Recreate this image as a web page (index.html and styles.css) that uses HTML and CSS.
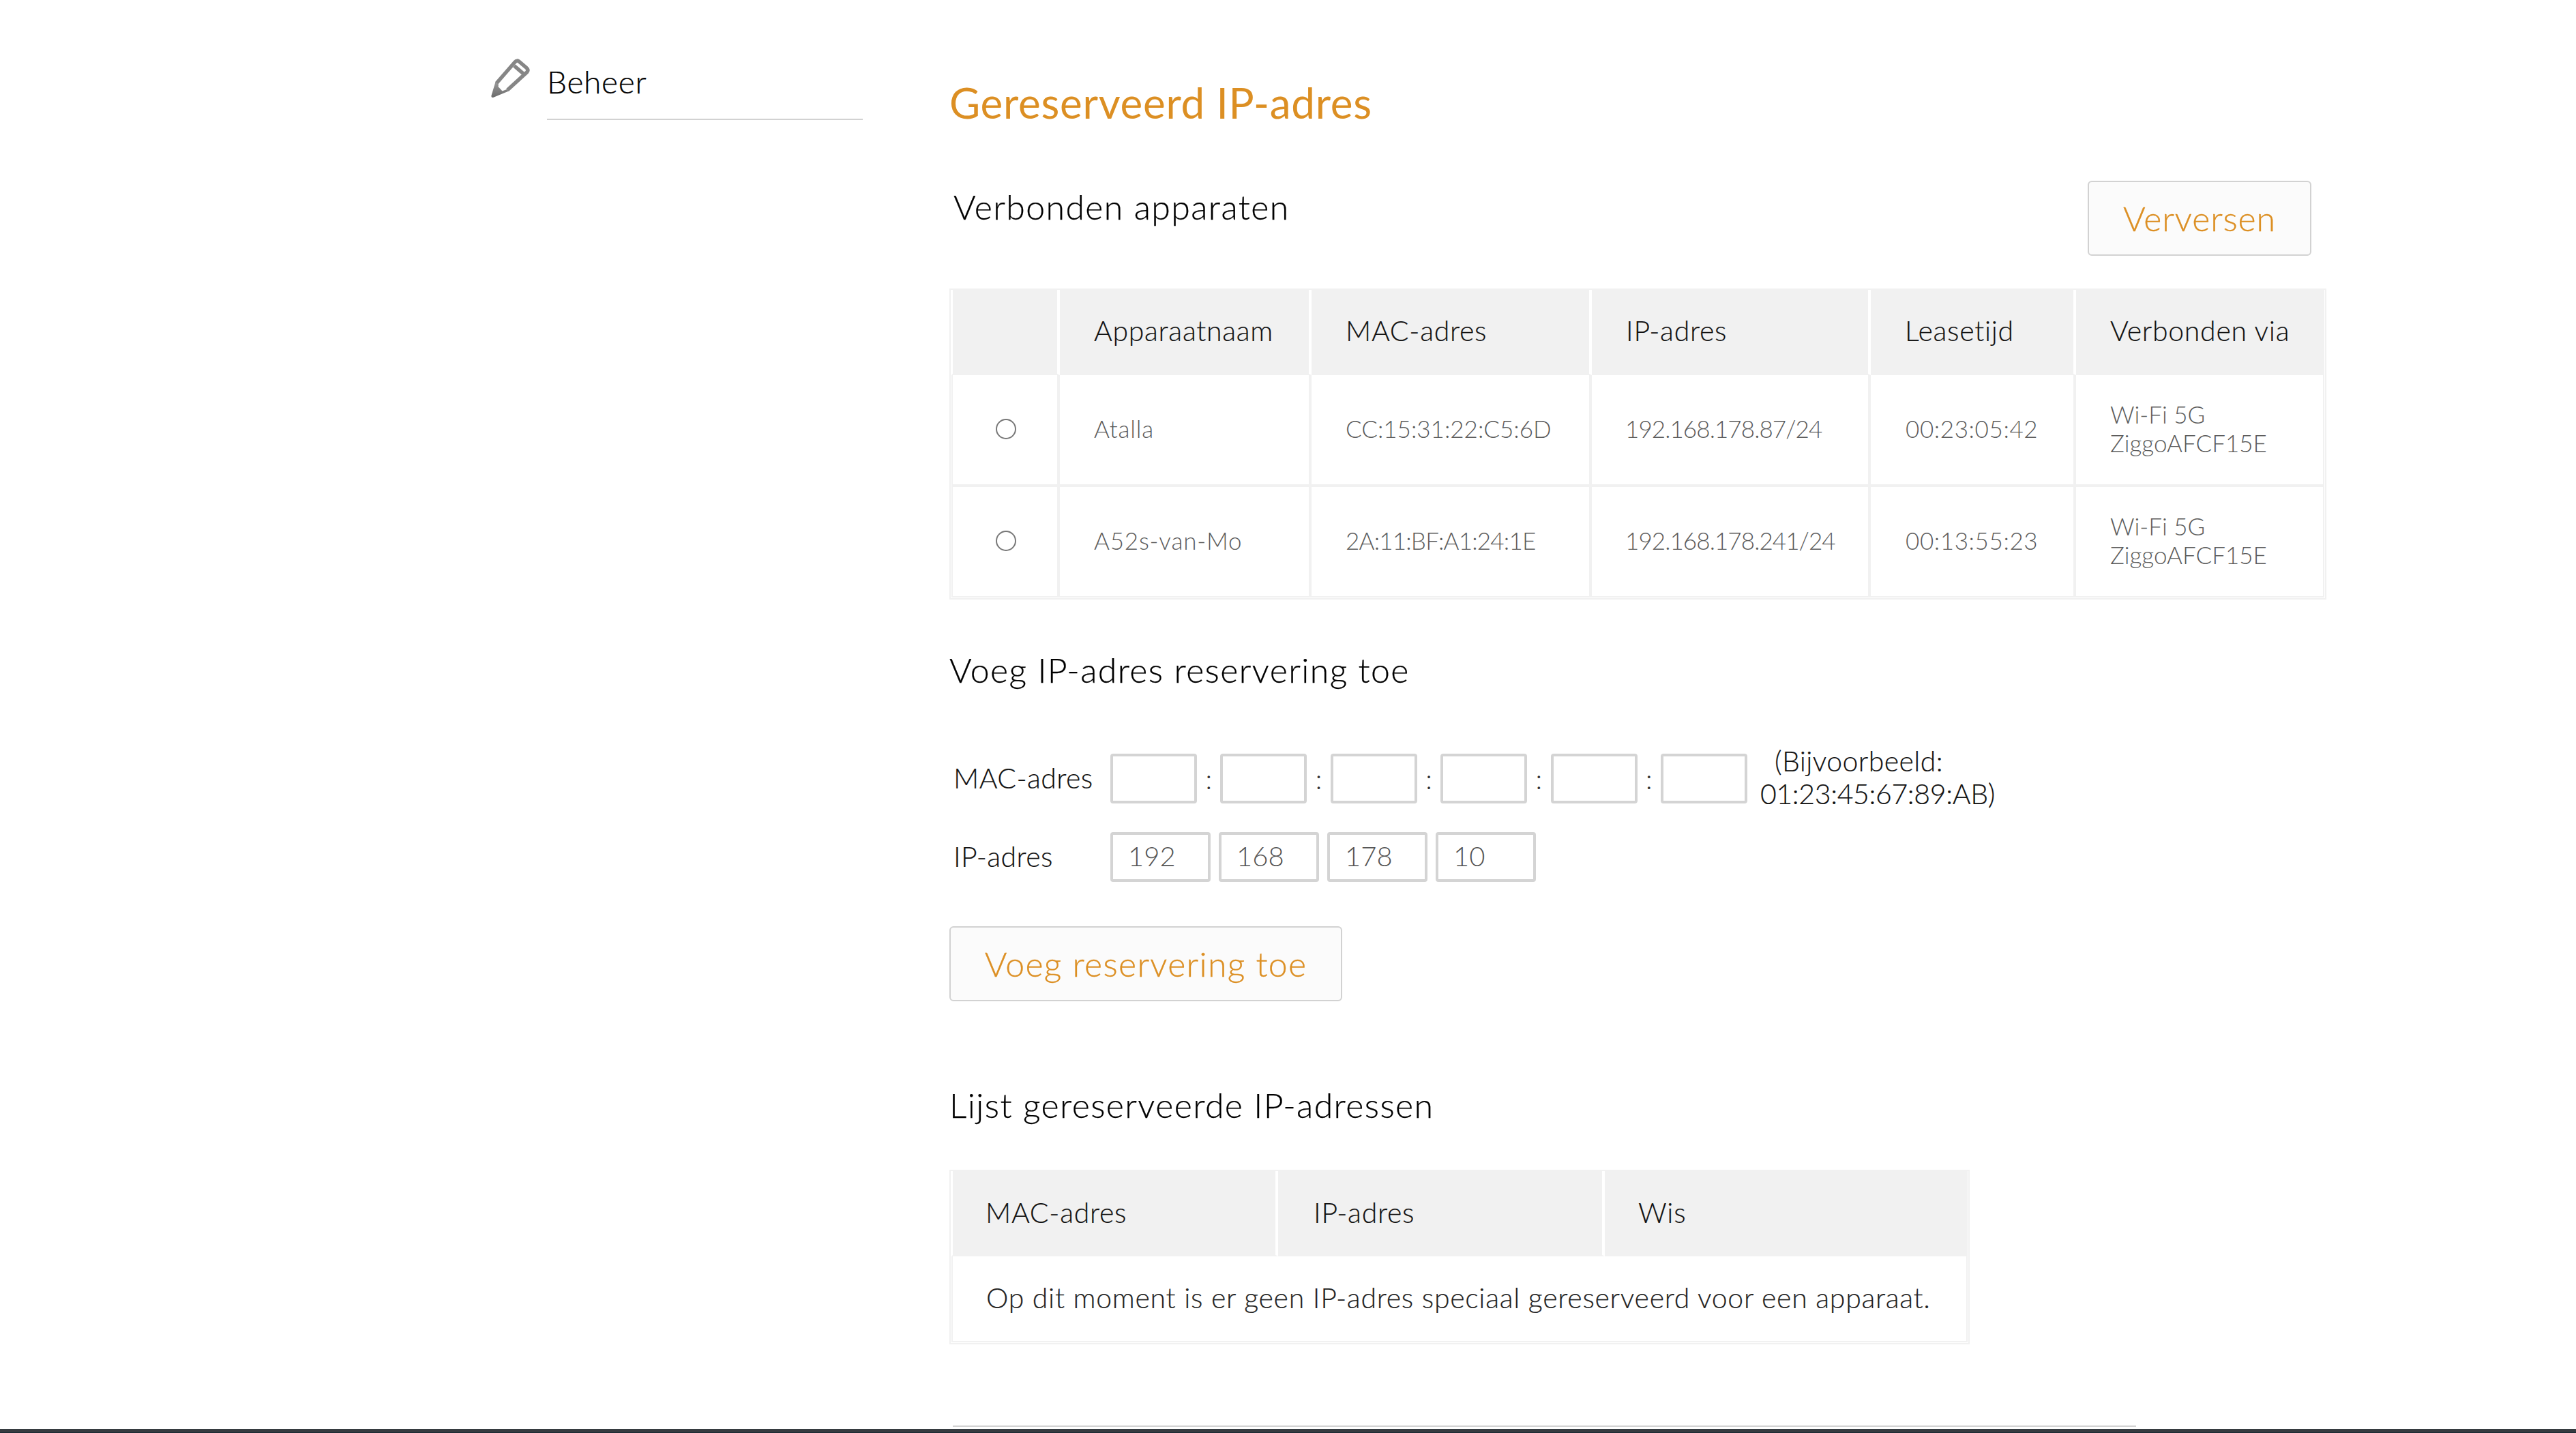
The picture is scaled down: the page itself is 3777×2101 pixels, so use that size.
FILE: index.html
```html
<!DOCTYPE html>
<html lang="nl">
<head>
<meta charset="utf-8">
<title>Gereserveerd IP-adres</title>
<link rel="stylesheet" href="styles.css">
</head>
<body>
<div class="page">
  <aside class="side">
    <svg class="pencil" viewBox="0 0 60 60" aria-hidden="true">
      <defs>
        <linearGradient id="pg" x1="0" y1="0" x2="0" y2="1">
          <stop offset="0" stop-color="#9a9a9a"/>
          <stop offset="1" stop-color="#6a6a6a"/>
        </linearGradient>
      </defs>
      <path class="pencil-line" d="M10 37 L37 6 Q40 2.500 43.500 5.500 L54 14.500 Q57.500 17.500 54.500 21 L26 47"/>
      <path class="pencil-line" d="M36 11.500 L50 23.500"/>
      <path class="pencil-tip" d="M8.500 35 L13 39 L12.500 42 L18.500 48.500 L25 46 L28 48.500 L5 58 Q2 58.500 2.500 55 Z"/>
    </svg>
    <div class="side-item">Beheer</div>
  </aside>
  <main class="main">
    <h1 class="title">Gereserveerd IP-adres</h1>
    <div class="head-row">
      <h2 class="sub sub-indent">Verbonden apparaten</h2>
      <button class="btn" type="button">Verversen</button>
    </div>
    <div class="tbl tbl-devices">
      <table>
        <colgroup>
          <col class="d1"><col class="d2"><col class="d3"><col class="d4"><col class="d5"><col class="d6">
        </colgroup>
        <thead>
          <tr><th></th><th>Apparaatnaam</th><th>MAC-adres</th><th>IP-adres</th><th>Leasetijd</th><th>Verbonden via</th></tr>
        </thead>
        <tbody>
          <tr>
            <td class="radio-cell"><input class="radio" type="radio" name="dev"></td>
            <td class="c-name">Atalla</td><td>CC:15:31:22:C5:6D</td><td class="c-ip">192.168.178.87/24</td><td class="c-time">00:23:05:42</td><td>Wi-Fi 5G<br>ZiggoAFCF15E</td>
          </tr>
          <tr>
            <td class="radio-cell"><input class="radio" type="radio" name="dev"></td>
            <td class="c-name">A52s-van-Mo</td><td class="c-mac2">2A:11:BF:A1:24:1E</td><td class="c-ip">192.168.178.241/24</td><td class="c-time">00:13:55:23</td><td>Wi-Fi 5G<br>ZiggoAFCF15E</td>
          </tr>
        </tbody>
      </table>
    </div>
    <h2 class="sub add-title">Voeg IP-adres reservering toe</h2>
    <div class="form-row mac-row">
      <label class="form-label">MAC-adres</label>
      <div class="mac-fields">
        <input class="field mac" type="text"><span class="colon">:</span>
        <input class="field mac" type="text"><span class="colon">:</span>
        <input class="field mac" type="text"><span class="colon">:</span>
        <input class="field mac" type="text"><span class="colon">:</span>
        <input class="field mac" type="text"><span class="colon">:</span>
        <input class="field mac" type="text">
      </div>
      <div class="example">(Bijvoorbeeld:<br>01:23:45:67:89:AB)</div>
    </div>
    <div class="form-row ip-row">
      <label class="form-label">IP-adres</label>
      <div class="ip-fields">
        <input class="field ip" type="text" value="192">
        <input class="field ip" type="text" value="168">
        <input class="field ip" type="text" value="178">
        <input class="field ip" type="text" value="10">
      </div>
    </div>
    <button class="btn add-btn" type="button">Voeg reservering toe</button>
    <h2 class="sub list-title">Lijst gereserveerde IP-adressen</h2>
    <div class="tbl tbl-list">
      <table>
        <colgroup><col class="r1"><col class="r2"><col class="r3"></colgroup>
        <thead><tr><th>MAC-adres</th><th>IP-adres</th><th>Wis</th></tr></thead>
        <tbody><tr><td class="empty" colspan="3">Op dit moment is er geen IP-adres speciaal gereserveerd voor een apparaat.</td></tr></tbody>
      </table>
    </div>
    <div class="end-rule"></div>
  </main>
</div>
<div class="bottom-bar"></div>
</body>
</html>
```
FILE: styles.css
```css
* { box-sizing: border-box; }
html, body { margin: 0; padding: 0; background: #fff; }
body {
  height: 2101px;
  overflow: hidden;
  font-family: "Lato", "Open Sans", sans-serif;
  font-weight: 300;
  color: #111;
}
.page { display: grid; grid-template-columns: 1392px 1fr; height: 2095px; }

.side { display: flex; align-items: flex-start; padding: 85px 0 0 718px; }
.pencil { width: 60px; height: 60px; flex: none; margin-right: 24px; }
.pencil-line { fill: none; stroke: #868686; stroke-width: 5.5; stroke-linejoin: round; }
.pencil-tip { fill: url(#pg); }
.side-item {
  width: 463px;
  margin-top: 8px;
  font-size: 46px;
  line-height: 54px;
  height: 83px;
  letter-spacing: .7px;
  color: #000;
  -webkit-text-stroke: .25px #000;
  border-bottom: 2px solid #d2d2d2;
}

.main { padding-top: 114px; }
.title { margin: 0; font-size: 62px; line-height: 72px; font-weight: 400; letter-spacing: .7px; color: #dc8f23; }
.sub { margin: 0; font-size: 50px; line-height: 58px; font-weight: 300; letter-spacing: 1.4px; color: #000; -webkit-text-stroke: .25px #000; }
.sub-indent { padding-left: 6px; margin-top: 9px; }
.head-row { display: flex; justify-content: space-between; align-items: flex-start; width: 1997px; margin-top: 79px; }
.btn {
  font-family: inherit;
  font-weight: 300;
  font-size: 50px;
  letter-spacing: .9px;
  color: #dc8f23;
  -webkit-text-stroke: .3px #dc8f23;
  background: #fbfbfb;
  border: 2px solid #d2d2d2;
  border-radius: 6px;
  height: 110px;
  padding: 0 50px;
}

.tbl { border: 2px solid #f1f1f1; padding: 0 1px 1px; }
.tbl-devices { width: 2019px; margin-top: 48px; }
.tbl-list { width: 1496px; margin-top: 66px; }
.tbl table { border-collapse: separate; border-spacing: 0; table-layout: fixed; width: 100%; }
.d1 { width: 159px; } .d2 { width: 369px; } .d3 { width: 411px; }
.d4 { width: 409px; } .d5 { width: 301px; } .d6 { width: 364px; }
.r1 { width: 479px; } .r2 { width: 479px; } .r3 { width: 532px; }

th {
  height: 125px;
  padding: 0 0 4px 50px;
  text-align: left;
  font-size: 41px;
  font-weight: 300;
  letter-spacing: .7px;
  color: #111;
  -webkit-text-stroke: .2px #111;
  background: #f1f1f1;
  background-clip: padding-box;
  border-right: 4px solid #fff;
  border-bottom: 2px solid #f1f1f1;
}
th:first-child { border-left: 2px solid #fff; padding-left: 48px; }
th:last-child { border-right: 0; }
.tbl-list th { padding-bottom: 2px; }
.tbl-list th:nth-child(2) { padding-left: 52px; }
.tbl-list th:nth-child(3) { padding-left: 49px; }

td {
  height: 164px;
  padding: 0 0 4px 50px;
  font-size: 35px;
  line-height: 42px;
  color: #5c5c5c;
  border-right: 4px solid #f1f1f1;
  border-bottom: 4px solid #f1f1f1;
}
td:first-child { border-left: 2px solid #f1f1f1; }
td:last-child { border-right: 2px solid #f1f1f1; }
tbody tr:last-child td { border-bottom-width: 2px; height: 162px; }
.c-name { letter-spacing: .8px; }
.c-ip { letter-spacing: -.9px; padding-left: 49px; }
.c-mac2 { letter-spacing: -.8px; }
.c-time { letter-spacing: .6px; padding-left: 51px; }
.radio-cell { padding: 0 0 12px 3px; text-align: center; }
.radio {
  appearance: none;
  display: inline-block;
  width: 30px;
  height: 30px;
  margin: 0;
  vertical-align: middle;
  border: 2px solid #777;
  border-radius: 50%;
  background: #fff;
}
.empty { height: 126px !important; padding: 0 0 2px 49px; font-size: 41px; letter-spacing: .7px; color: #222; -webkit-text-stroke: .2px #222; border-right-width: 2px; }

.add-title { margin-top: 74px; }
.form-row { display: flex; align-items: center; }
.mac-row { margin-top: 94px; height: 73px; }
.ip-row { margin-top: 42px; height: 73px; }
.form-label { width: 236px; padding: 0 0 3px 6px; flex: none; font-size: 41px; letter-spacing: .4px; color: #111; -webkit-text-stroke: .2px #111; }
.mac-fields, .ip-fields { display: flex; align-items: center; }
.ip-fields { gap: 12px; }
.field {
  height: 73px;
  border: 4px solid #d4d4d4;
  border-radius: 4px;
  background: #fff;
  font-family: inherit;
  font-weight: 300;
  font-size: 40px;
  color: #555;
  padding: 0 0 4px 22px;
  outline: none;
}
.mac { width: 127px; }
.ip { width: 147px; }
.colon { width: 34.4px; text-align: center; font-size: 40px; color: #333; }
.example { margin-left: 19px; font-size: 41px; line-height: 48px; color: #111; -webkit-text-stroke: .2px #111; white-space: nowrap; position: relative; top: -2px; letter-spacing: -.35px; text-indent: 21px; }
.example::first-line { letter-spacing: .4px; }
.add-btn { display: block; width: 576px; margin-top: 65px; padding: 0; letter-spacing: 1.3px; }
.list-title { margin-top: 123px; }
.end-rule { width: 1735px; height: 2px; margin: 119px 0 0 5px; background: #d2d2d2; }
.bottom-bar { height: 6px; background: linear-gradient(#363b40 0, #363b40 5px, #1b2a33 5px); }
```
